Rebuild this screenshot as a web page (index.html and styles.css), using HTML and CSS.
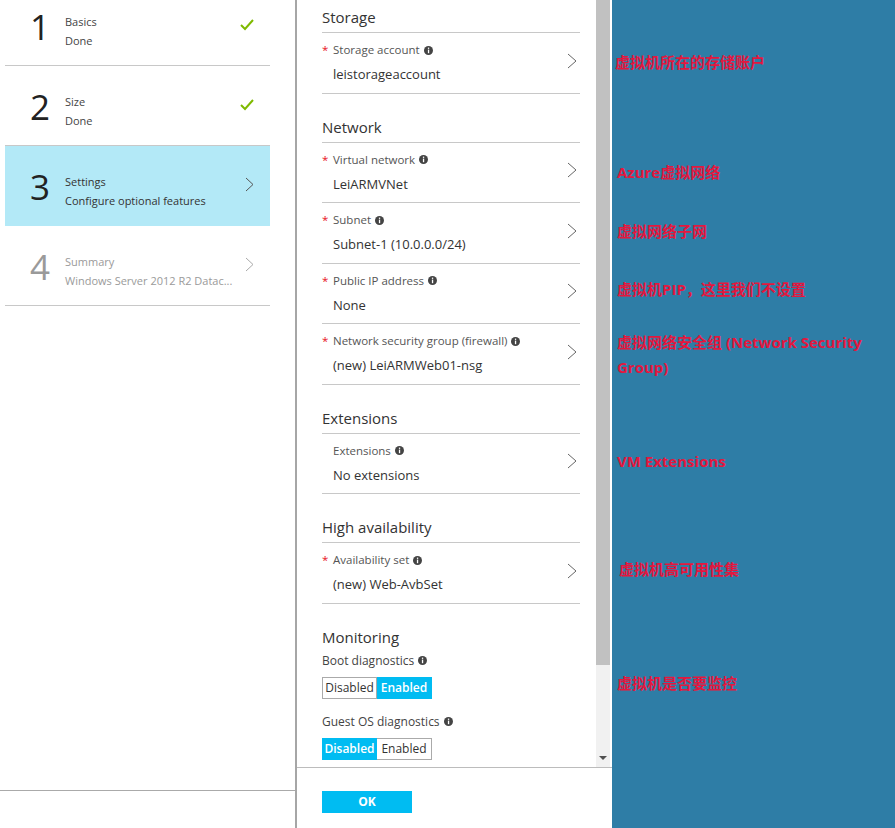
FILE: index.html
```html
<!DOCTYPE html>
<html lang="zh-CN">
<head>
  <meta charset="UTF-8" />
  <title>Create virtual machine - Settings</title>
  <link rel="stylesheet" href="styles.css">
</head>
<body>
<div class="page">

  <!-- kroki kreatora -->
  <aside class="wizard">
    <div class="steps">
      <div class="step">
        <div class="step-num">1</div>
        <div class="step-text">
          <div>Basics</div>
          <div>Done</div>
        </div>
        <svg class="step-icon" width="14" height="12" viewBox="0 0 14 12"><polyline points="1,6 5,10 13,1" fill="none" stroke="#7fba00" stroke-width="2"/></svg>
      </div>
      <div class="step">
        <div class="step-num">2</div>
        <div class="step-text">
          <div>Size</div>
          <div>Done</div>
        </div>
        <svg class="step-icon" width="14" height="12" viewBox="0 0 14 12"><polyline points="1,6 5,10 13,1" fill="none" stroke="#7fba00" stroke-width="2"/></svg>
      </div>
      <div class="step active">
        <div class="step-num">3</div>
        <div class="step-text">
          <div>Settings</div>
          <div>Configure optional features</div>
        </div>
        <svg class="step-icon" width="9" height="15" viewBox="0 0 9 15"><polyline points="1,1 8,7.5 1,14" fill="none" stroke="#555" stroke-width="1"/></svg>
      </div>
      <div class="step disabled">
        <div class="step-num">4</div>
        <div class="step-text">
          <div>Summary</div>
          <div>Windows Server 2012 R2 Datac...</div>
        </div>
        <svg class="step-icon" width="9" height="15" viewBox="0 0 9 15"><polyline points="1,1 8,7.5 1,14" fill="none" stroke="#aaa" stroke-width="1"/></svg>
      </div>
    </div>
    <div class="wizard-foot"></div>
  </aside>

  <!-- formularz -->
  <section class="blade">
    <div class="blade-body">
      <div class="form">

        <div class="group">
          <div class="group-title">Storage</div>
          <div class="field">
            <div class="field-text">
              <div class="field-label"><span class="req">*</span>Storage account<svg class="info" width="9" height="9" viewBox="0 0 9 9"><circle cx="4.5" cy="4.5" r="4.5" fill="#444"/><rect x="3.9" y="1.6" width="1.3" height="1.3" fill="#fff"/><rect x="3.9" y="3.6" width="1.3" height="3.6" fill="#fff"/></svg></div>
              <div class="field-value">leistorageaccount</div>
            </div>
            <svg class="chev" width="10" height="16" viewBox="0 0 10 16"><polyline points="1,1 9,8 1,15" fill="none" stroke="#666" stroke-width="1"/></svg>
          </div>
        </div>

        <div class="group">
          <div class="group-title">Network</div>
          <div class="field">
            <div class="field-text">
              <div class="field-label"><span class="req">*</span>Virtual network<svg class="info" width="9" height="9" viewBox="0 0 9 9"><circle cx="4.5" cy="4.5" r="4.5" fill="#444"/><rect x="3.9" y="1.6" width="1.3" height="1.3" fill="#fff"/><rect x="3.9" y="3.6" width="1.3" height="3.6" fill="#fff"/></svg></div>
              <div class="field-value">LeiARMVNet</div>
            </div>
            <svg class="chev" width="10" height="16" viewBox="0 0 10 16"><polyline points="1,1 9,8 1,15" fill="none" stroke="#666" stroke-width="1"/></svg>
          </div>
          <div class="field">
            <div class="field-text">
              <div class="field-label"><span class="req">*</span>Subnet<svg class="info" width="9" height="9" viewBox="0 0 9 9"><circle cx="4.5" cy="4.5" r="4.5" fill="#444"/><rect x="3.9" y="1.6" width="1.3" height="1.3" fill="#fff"/><rect x="3.9" y="3.6" width="1.3" height="3.6" fill="#fff"/></svg></div>
              <div class="field-value">Subnet-1 (10.0.0.0/24)</div>
            </div>
            <svg class="chev" width="10" height="16" viewBox="0 0 10 16"><polyline points="1,1 9,8 1,15" fill="none" stroke="#666" stroke-width="1"/></svg>
          </div>
          <div class="field">
            <div class="field-text">
              <div class="field-label"><span class="req">*</span>Public IP address<svg class="info" width="9" height="9" viewBox="0 0 9 9"><circle cx="4.5" cy="4.5" r="4.5" fill="#444"/><rect x="3.9" y="1.6" width="1.3" height="1.3" fill="#fff"/><rect x="3.9" y="3.6" width="1.3" height="3.6" fill="#fff"/></svg></div>
              <div class="field-value">None</div>
            </div>
            <svg class="chev" width="10" height="16" viewBox="0 0 10 16"><polyline points="1,1 9,8 1,15" fill="none" stroke="#666" stroke-width="1"/></svg>
          </div>
          <div class="field">
            <div class="field-text">
              <div class="field-label"><span class="req">*</span>Network security group (firewall)<svg class="info" width="9" height="9" viewBox="0 0 9 9"><circle cx="4.5" cy="4.5" r="4.5" fill="#444"/><rect x="3.9" y="1.6" width="1.3" height="1.3" fill="#fff"/><rect x="3.9" y="3.6" width="1.3" height="3.6" fill="#fff"/></svg></div>
              <div class="field-value">(new) LeiARMWeb01-nsg</div>
            </div>
            <svg class="chev" width="10" height="16" viewBox="0 0 10 16"><polyline points="1,1 9,8 1,15" fill="none" stroke="#666" stroke-width="1"/></svg>
          </div>
        </div>

        <div class="group">
          <div class="group-title">Extensions</div>
          <div class="field">
            <div class="field-text">
              <div class="field-label">Extensions<svg class="info" width="9" height="9" viewBox="0 0 9 9"><circle cx="4.5" cy="4.5" r="4.5" fill="#444"/><rect x="3.9" y="1.6" width="1.3" height="1.3" fill="#fff"/><rect x="3.9" y="3.6" width="1.3" height="3.6" fill="#fff"/></svg></div>
              <div class="field-value">No extensions</div>
            </div>
            <svg class="chev" width="10" height="16" viewBox="0 0 10 16"><polyline points="1,1 9,8 1,15" fill="none" stroke="#666" stroke-width="1"/></svg>
          </div>
        </div>

        <div class="group">
          <div class="group-title">High availability</div>
          <div class="field">
            <div class="field-text">
              <div class="field-label"><span class="req">*</span>Availability set<svg class="info" width="9" height="9" viewBox="0 0 9 9"><circle cx="4.5" cy="4.5" r="4.5" fill="#444"/><rect x="3.9" y="1.6" width="1.3" height="1.3" fill="#fff"/><rect x="3.9" y="3.6" width="1.3" height="3.6" fill="#fff"/></svg></div>
              <div class="field-value">(new) Web-AvbSet</div>
            </div>
            <svg class="chev" width="10" height="16" viewBox="0 0 10 16"><polyline points="1,1 9,8 1,15" fill="none" stroke="#666" stroke-width="1"/></svg>
          </div>
        </div>

        <div class="group">
          <div class="group-title plain">Monitoring</div>
          <div class="opt-label">Boot diagnostics<svg class="info" width="9" height="9" viewBox="0 0 9 9"><circle cx="4.5" cy="4.5" r="4.5" fill="#444"/><rect x="3.9" y="1.6" width="1.3" height="1.3" fill="#fff"/><rect x="3.9" y="3.6" width="1.3" height="3.6" fill="#fff"/></svg></div>
          <div class="toggle">
            <span class="toggle-opt">Disabled</span><span class="toggle-opt on">Enabled</span>
          </div>
          <div class="opt-label">Guest OS diagnostics<svg class="info" width="9" height="9" viewBox="0 0 9 9"><circle cx="4.5" cy="4.5" r="4.5" fill="#444"/><rect x="3.9" y="1.6" width="1.3" height="1.3" fill="#fff"/><rect x="3.9" y="3.6" width="1.3" height="3.6" fill="#fff"/></svg></div>
          <div class="toggle">
            <span class="toggle-opt on">Disabled</span><span class="toggle-opt">Enabled</span>
          </div>
        </div>

      </div>
      <div class="scrollbar">
        <div class="thumb"></div>
        <div class="track"><span class="arrow"></span></div>
      </div>
    </div>
    <div class="blade-foot">
      <button class="ok">OK</button>
    </div>
  </section>

  <!-- adnotacje -->
  <section class="notes">
    <div class="note n1">虚拟机所在的存储账户</div>
    <div class="note n2">Azure虚拟网络</div>
    <div class="note n3">虚拟网络子网</div>
    <div class="note n4">虚拟机PIP，这里我们不设置</div>
    <div class="note n5">虚拟网络安全组 (Network Security Group)</div>
    <div class="note n6">VM Extensions</div>
    <div class="note n7">虚拟机高可用性集</div>
    <div class="note n8">虚拟机是否要监控</div>
  </section>

</div>
</body>
</html>
```

FILE: styles.css
```css
:root {
  --line: #c8c8c8;
  --azure: #00bcf2;
  --txt: #333;
  --note-bg: #2e7da6;
  --note-txt: #e3173e;
}
* { box-sizing: border-box; }
body {
  margin: 0;
  font-family: 'Open Sans', 'Noto Sans', sans-serif;
  color: var(--txt);
  background: #fff;
}
.page {
  display: flex;
  height: 828px;
  overflow: hidden;
}

/* --- kreator (lewa kolumna) --- */
.wizard {
  width: 295px;
  display: flex;
  flex-direction: column;
}
.steps {
  flex: 1;
  padding-left: 5px;
}
.step {
  width: 265px;
  height: 80px;
  display: flex;
  align-items: center;
  padding: 0 16px 0 25px;
  border-bottom: 1px solid var(--line);
}
.step:first-child { margin-top: -14px; }
.step-num {
  width: 35px;
  font-size: 35px;
  font-weight: 400;
  line-height: 40px;
  color: #222;
  padding-top: 2px;
}
.step-text {
  flex: 1;
  font-size: 11px;
  line-height: 19px;
  color: #444;
  padding-top: 10px;
  white-space: nowrap;
}
.step-icon { margin-top: -2px; }
.step.active {
  background: #b3e9f7;
  border-bottom-color: #b3e9f7;
}
.step.active .step-text { color: #333; }
.step.disabled .step-num,
.step.disabled .step-text { color: #9a9a9a; }
.wizard-foot {
  height: 38px;
  border-top: 1px solid #aaa;
}

/* --- blade (srodek) --- */
.blade {
  width: 317px;
  border-left: 2px solid #a6a6a6;
  display: flex;
  flex-direction: column;
}
.blade-body {
  height: 767px;
  display: flex;
  overflow: hidden;
}
.form {
  flex: 1;
  padding: 6px 16px 0 25px;
}
.group-title {
  font-size: 15px;
  line-height: 22px;
  padding-bottom: 4px;
  margin-top: 22px;
  border-bottom: 1px solid var(--line);
  color: #333;
}
.group:first-child .group-title { margin-top: 0; }
.group-title.plain { border-bottom: none; }
.field {
  display: flex;
  align-items: center;
  padding: 8px 3px 8.5px 11px;
  border-bottom: 1px solid var(--line);
}
.field-text { flex: 1; }
.field-label {
  font-size: 11.5px;
  line-height: 18px;
  color: #555;
}
.req {
  display: inline-block;
  width: 11px;
  margin-left: -11px;
  color: #e81123;
}
.info {
  margin-left: 4px;
  vertical-align: -0.5px;
}
.field-value {
  margin-top: 5px;
  font-size: 13px;
  line-height: 20px;
  color: #333;
}
.chev { margin-top: -4px; }
.opt-label {
  font-size: 12px;
  line-height: 16px;
  color: #444;
  margin-top: 1px;
}
.toggle {
  display: flex;
  margin: 8px 0 15px;
}
.toggle-opt {
  width: 55px;
  height: 22px;
  border: 1px solid #aaa;
  font-size: 12px;
  line-height: 20px;
  text-align: center;
  color: #333;
}
.toggle-opt + .toggle-opt { border-left: none; }
.toggle-opt.on {
  background: var(--azure);
  border-color: var(--azure);
  color: #fff;
  font-weight: 600;
}

/* udawany pasek przewijania */
.scrollbar {
  width: 14px;
  margin-right: 2px;
  display: flex;
  flex-direction: column;
}
.thumb {
  height: 665px;
  background: #c1c1c1;
}
.track {
  flex: 1;
  background: #f1f1f1;
  display: flex;
  justify-content: center;
  align-items: flex-end;
  padding-bottom: 7px;
}
.arrow {
  width: 0;
  height: 0;
  border-left: 4px solid transparent;
  border-right: 4px solid transparent;
  border-top: 4px solid #505050;
}
.blade-foot {
  flex: 1;
  border-top: 1px solid #bcbcbc;
  padding: 21px 0 0 25px;
}
.ok {
  width: 90px;
  height: 22px;
  border: none;
  background: var(--azure);
  color: #fff;
  font-family: 'Open Sans', sans-serif;
  font-size: 12px;
  font-weight: 700;
  padding: 0;
}

/* --- adnotacje (prawa kolumna) --- */
.notes {
  flex: 1;
  background: var(--note-bg);
  padding: 51px 20px 0 3px;
  font-family: 'Open Sans', 'Noto Sans CJK SC', sans-serif;
  font-weight: 700;
  font-size: 15px;
  line-height: 22px;
  color: var(--note-txt);
}
.note { margin-left: 2px; }
.n1 { margin-left: 0; }
.n2 { margin-top: 88px; }
.n3 { margin-top: 37px; }
.n4 { margin-top: 36px; }
.n5 { margin-top: 30px; line-height: 25px; }
.n6 { margin-top: 70px; }
.n7 { margin-top: 86px; margin-left: 4px; }
.n8 { margin-top: 92px; }
```
